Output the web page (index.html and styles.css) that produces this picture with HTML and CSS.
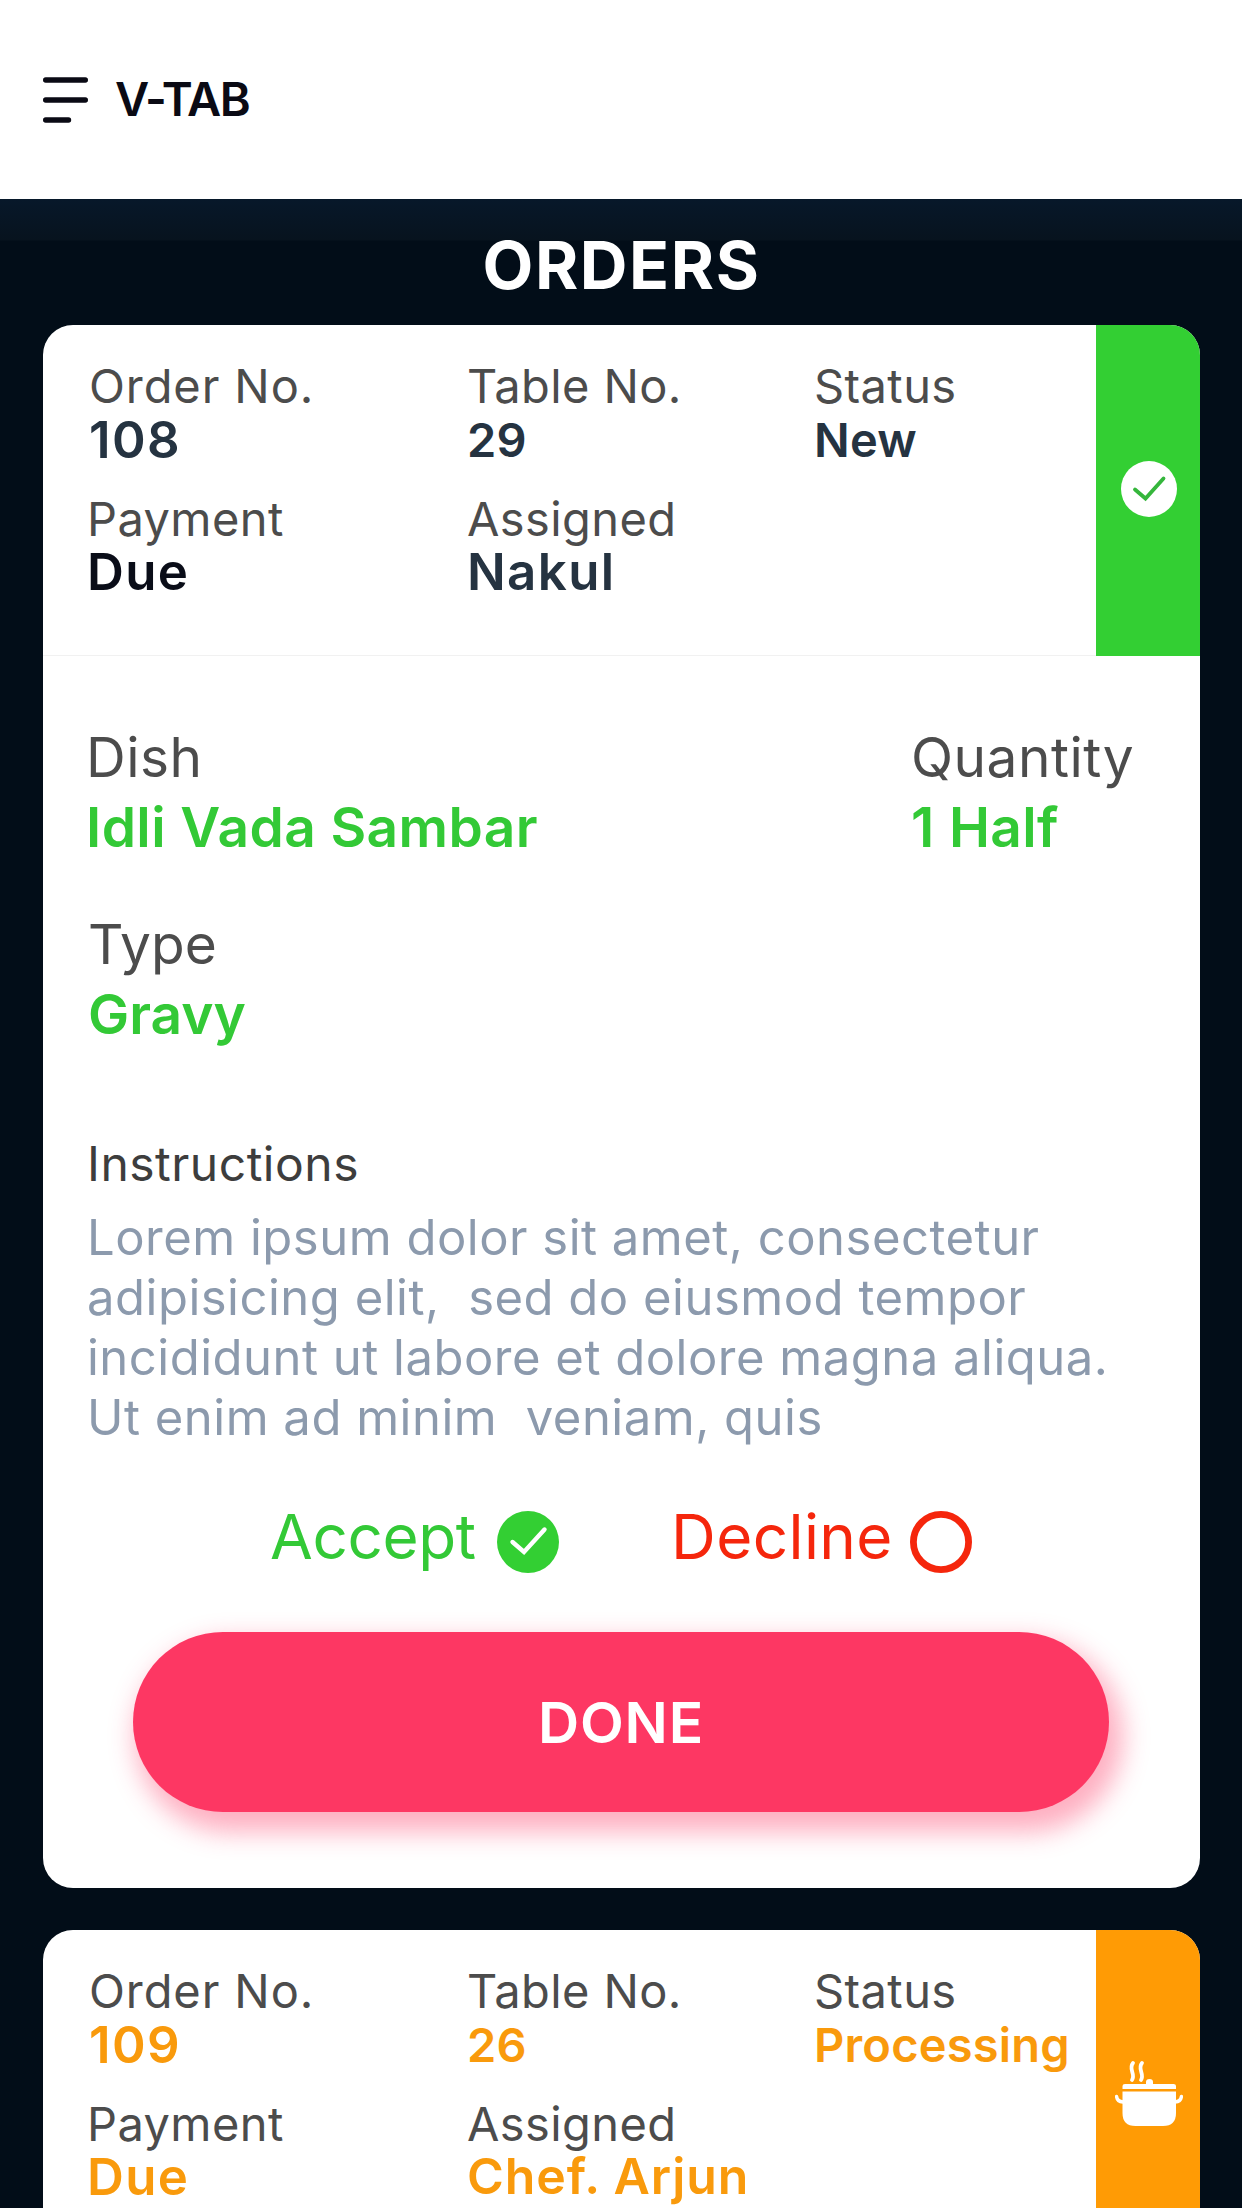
FILE: index.html
```
<!DOCTYPE html>
<html lang="en">
<head>
  <meta charset="UTF-8" />
  <meta name="viewport" content="width=device-width, initial-scale=1" />
  <title>V-TAB - Orders</title>
  <link rel="stylesheet" href="styles.css">
</head>
<body>

  <header class="topbar">
    <button class="menu" aria-label="Menu">
      <svg width="45" height="46" viewBox="0 0 45 46" fill="none" stroke="#0a0a14" stroke-width="5.4" stroke-linecap="round">
        <path d="M2.7 3H42.3M2.7 23H42.3M2.7 43H25.5" />
      </svg>
    </button>
    <span class="brand">V-TAB</span>
  </header>

  <main class="orders">
    <h1>ORDERS</h1>

    <!-- Order 108 -->
    <section class="card">
      <div class="card-head">
        <div class="info">
          <div class="field"><span class="label">Order No.</span><span class="value big">108</span></div>
          <div class="field"><span class="label">Table No.</span><span class="value">29</span></div>
          <div class="field"><span class="label">Status</span><span class="value">New</span></div>
          <div class="field second"><span class="label">Payment</span><span class="value big dark">Due</span></div>
          <div class="field second"><span class="label">Assigned</span><span class="value big">Nakul</span></div>
        </div>
        <div class="strip new">
          <svg width="56" height="56" viewBox="0 0 56 56" fill="none">
            <circle cx="28" cy="28" r="28" fill="#fff" />
            <path d="M14 28.5L24.5 37.5L42.5 17.5" stroke="#35b63c" stroke-width="3.8" stroke-linecap="round" />
          </svg>
        </div>
      </div>

      <div class="card-body">
        <div class="dish">
          <div class="item"><span class="label">Dish</span><span class="value">Idli Vada Sambar</span></div>
          <div class="item"><span class="label">Quantity</span><span class="value">1 Half</span></div>
          <div class="item type"><span class="label">Type</span><span class="value">Gravy</span></div>
        </div>

        <h2>Instructions</h2>
        <p class="note">Lorem ipsum dolor sit amet, consectetur
adipisicing elit,  sed do eiusmod tempor
incididunt ut labore et dolore magna aliqua.
Ut enim ad minim  veniam, quis</p>

        <div class="options">
          <div class="option accept">
            <span>Accept</span>
            <svg width="62" height="62" viewBox="0 0 62 62" fill="none">
              <circle cx="31" cy="31" r="31" fill="#33cf33" />
              <path d="M15.5 31L27 41L47.5 18.5" stroke="#fff" stroke-width="4.4" stroke-linecap="round" />
            </svg>
          </div>
          <div class="option decline">
            <span>Decline</span>
            <svg width="62" height="62" viewBox="0 0 62 62" fill="none">
              <circle cx="31" cy="31" r="27.6" stroke="#f5260c" stroke-width="6.8" />
            </svg>
          </div>
        </div>

        <button class="done">DONE</button>
      </div>
    </section>

    <!-- Order 109 -->
    <section class="card processing">
      <div class="card-head">
        <div class="info">
          <div class="field"><span class="label">Order No.</span><span class="value big">109</span></div>
          <div class="field"><span class="label">Table No.</span><span class="value">26</span></div>
          <div class="field"><span class="label">Status</span><span class="value">Processing</span></div>
          <div class="field second"><span class="label">Payment</span><span class="value big">Due</span></div>
          <div class="field second"><span class="label">Assigned</span><span class="value chef">Chef. Arjun</span></div>
        </div>
        <div class="strip cooking">
          <svg width="68" height="68" viewBox="0 0 68 68" fill="none">
            <path d="M18 3C13 9 21 14 17 20M27 3C22 9 30 14 26 20" stroke="#fff" stroke-width="3.8" stroke-linecap="round" />
            <path d="M7.5 29V26Q7.5 24 10 24H31V22Q31 19 34.5 19T38 22V24H58.5Q61 24 61 26V29Z" fill="#fff" />
            <path d="M7.5 31.5H61V53Q61 66 48 66H20.5Q7.5 66 7.5 53Z" fill="#fff" />
            <path d="M1.6 36.5Q2 41.5 8 42M66.4 36.5Q66 41.5 60 42" stroke="#fff" stroke-width="3.4" stroke-linecap="round" />
          </svg>
        </div>
      </div>
    </section>
  </main>

</body>
</html>
```
FILE: styles.css
```
* {
  box-sizing: border-box;
}

body {
  margin: 0;
  height: 2208px;
  overflow: hidden;
  font-family: Inter, "Open Sans", sans-serif;
  color: #4c4c4c;
  background-color: #020d18;
}

button {
  border: none;
  padding: 0;
  font-family: inherit;
  cursor: pointer;
}

/* Top bar */
.topbar {
  display: flex;
  align-items: center;
  gap: 27px;
  height: 199px;
  padding-left: 43px;
  background-color: white;
}

.menu {
  height: 46px;
  background: none;
}

.menu svg {
  display: block;
}

.brand {
  margin-bottom: 2px;
  font-size: 47px;
  font-weight: 600;
  letter-spacing: -1.6px;
  color: #0a0a14;
}

.orders {
  padding: 26px 42px 0 43px;
  background: linear-gradient(#07182a, #07131e 41px, #020d18 42px);
}

h1 {
  margin: 0 0 20px;
  font-size: 66px;
  font-weight: 700;
  line-height: 80px;
  letter-spacing: 1.6px;
  text-align: center;
  color: white;
}

/* Cards */
.card {
  margin-bottom: 42px;
  border-radius: 30px;
  background-color: white;
  overflow: hidden;
}

.card-head {
  display: flex;
  justify-content: space-between;
  height: 331px;
  border-bottom: 1px solid #f1f1f1;
}

.info {
  display: grid;
  grid-template-columns: 380px 347px auto;
  grid-template-rows: 108px 108px;
  row-gap: 25px;
  padding: 34px 0 0 44px;
}

.field {
  display: flex;
  flex-direction: column;
  font-size: 47px;
  line-height: 54px;
  white-space: nowrap;
}

.field:first-child {
  padding-left: 2px;
}

.field:first-child .label {
  letter-spacing: 0.9px;
}

.field .label {
  letter-spacing: 0.4px;
}

.field .value {
  font-weight: 600;
  letter-spacing: 0.2px;
  color: #253341;
}

.field .big {
  font-size: 51px;
  letter-spacing: 1.4px;
}

.field .chef {
  font-size: 50px;
  letter-spacing: 0.9px;
}

.field .dark {
  color: #0a0d18;
}

.second .value {
  line-height: 51px;
}

.processing .value {
  color: #f99a0c;
}

.strip {
  display: flex;
  align-items: center;
  justify-content: center;
  width: 104px;
  height: 331px;
  padding: 0 0 3px 1px;
}

.new {
  background-color: #33cf33;
}

.cooking {
  background-color: #ff9b05;
}

.card-body {
  padding: 67px 43px 76px;
}

.dish {
  display: grid;
  grid-template-columns: 825px auto;
  row-gap: 49px;
}

.item {
  display: flex;
  flex-direction: column;
  gap: 2px;
  font-size: 55px;
  line-height: 68px;
}

.item .label {
  letter-spacing: 0.5px;
}

.item .value {
  font-weight: 600;
  letter-spacing: 0.4px;
  color: #33c936;
}

.type {
  padding-left: 2px;
}

.type .label,
.type .value {
  letter-spacing: 0;
}

h2 {
  margin: 86px 0 14px 1px;
  font-size: 48px;
  font-weight: 400;
  line-height: 60px;
  letter-spacing: 0.5px;
  color: #3d3d3d;
}

.note {
  margin: 0 0 0 1px;
  font-size: 49px;
  line-height: 60px;
  letter-spacing: 0.5px;
  white-space: pre;
  color: #8c9aad;
}

/* Accept / decline */
.options {
  display: flex;
  gap: 112px;
  margin-top: 53px;
  padding-left: 184px;
}

.option {
  display: flex;
  align-items: center;
  justify-content: space-between;
  height: 72px;
  font-size: 62px;
  line-height: 62px;
}

.option svg {
  margin-top: 10px;
}

.accept {
  width: 289px;
  letter-spacing: -0.4px;
  color: #33c936;
}

.decline {
  width: 301px;
  letter-spacing: 0.4px;
  color: #f5260c;
}

.done {
  display: block;
  width: 976px;
  height: 180px;
  margin: 59px 0 0 47px;
  border-radius: 90px;
  font-size: 57px;
  font-weight: 600;
  letter-spacing: 0.8px;
  color: white;
  background-color: #fd3763;
  box-shadow: 8px 14px 26px 6px rgba(253, 55, 99, 0.4);
}
```
